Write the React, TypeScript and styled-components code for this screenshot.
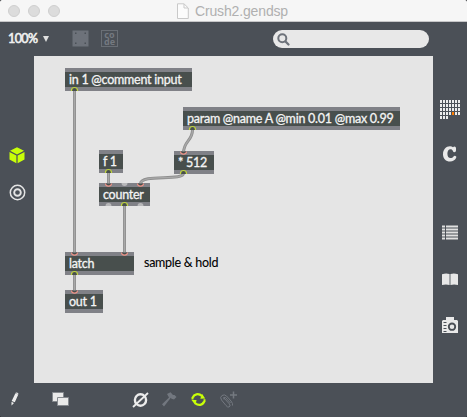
import React from "react";
import styled, { createGlobalStyle } from "styled-components";

const Global = createGlobalStyle`
  body { margin: 0; background: #000; overflow: hidden; }
  * { box-sizing: border-box; }
`;

const Window = styled.div`
  width: 467px;
  height: 417px;
  display: grid;
  grid-template-rows: 22px 34px 327px 34px;
  background: #4b5057;
  border-radius: 2px 2px 1px 1px;
  overflow: hidden;
  font-family: Lato, sans-serif;
`;

const TitleBar = styled.header`
  display: grid;
  grid-template-columns: 176px 1fr;
  background: #f6f6f6;
  border-bottom: 1px solid #c6c6c8;
`;

const Lights = styled.div`
  display: flex;
  gap: 8px;
  padding: 5px 0 0 8px;
`;

const Light = styled.i`
  width: 12px;
  height: 12px;
  border-radius: 50%;
  background: #dcdcdc;
  border: 1px solid #cfcfcf;
`;

const Title = styled.div`
  display: flex;
  align-items: flex-start;
  gap: 5px;
  padding-top: 3px;
  font: 14px/17px "Liberation Sans", sans-serif;
  letter-spacing: -0.15px;
  color: #b0b0b0;
  white-space: nowrap;
`;

const Toolbar = styled.div`
  display: flex;
  align-items: flex-start;
  padding-left: 8px;
`;

const Zoom = styled.div`
  display: flex;
  align-items: center;
  gap: 6px;
  width: 64px;
  height: 34px;
  padding-bottom: 1px;
  color: #f0f0f0;
  font-size: 12.5px;
  font-weight: 400;
  letter-spacing: -0.6px;
  -webkit-text-stroke: 0.6px #f0f0f0;
`;

const ToolIcons = styled.div`
  display: flex;
  gap: 12px;
  padding-top: 8px;
  width: 201px;
`;

const Search = styled.div`
  display: flex;
  width: 156px;
  height: 18px;
  margin-top: 8px;
  padding: 3px 0 0 4px;
  border-radius: 9px;
  background: #e8e8e8;
`;

const Body = styled.main`
  display: grid;
  grid-template-columns: 34px 399px 34px;
`;

const Rail = styled.aside<{ $top: number }>`
  display: flex;
  flex-direction: column;
  align-items: center;
  padding-top: ${(p) => p.$top}px;
`;

const Slot = styled.span<{ $after?: number }>`
  display: flex;
  margin-bottom: ${(p) => p.$after ?? 0}px;
`;

const Canvas = styled.section`
  position: relative;
  background: #e5e5e5;
`;

const Overlay = styled.svg`
  position: absolute;
  left: 0;
  top: 0;
  pointer-events: none;
`;

const Node = styled.div<{ $x: number; $y: number; $w: number }>`
  position: absolute;
  left: ${(p) => p.$x}px;
  top: ${(p) => p.$y}px;
  width: ${(p) => p.$w}px;
  height: 23px;
  padding-left: 4px;
  border: solid #808187;
  border-width: 4px 0;
  background: #484f4d;
  color: #f4f4f4;
  font-size: 12.5px;
  line-height: 15px;
  letter-spacing: -0.25px;
  -webkit-text-stroke: 0.3px #f4f4f4;
  white-space: nowrap;
`;

const Comment = styled.div`
  position: absolute;
  left: 110px;
  top: 199px;
  font-size: 12.5px;
  line-height: 15px;
  letter-spacing: -0.27px;
  -webkit-text-stroke: 0.1px #000;
  color: #000;
  white-space: nowrap;
`;

const Footer = styled.footer`
  display: flex;
  align-items: flex-start;
  padding: 8px 0 0 10px;
`;

const Action = styled.span<{ $w: number }>`
  display: flex;
  width: ${(p) => p.$w}px;
`;

const nodes = [
  { text: "in 1 @comment input", x: 31, y: 12, w: 127 },
  { text: "param @name A @min 0.01 @max 0.99", x: 149, y: 51, w: 217 },
  { text: "f 1", x: 65, y: 94, w: 24 },
  { text: "* 512", x: 140, y: 95, w: 40 },
  { text: "counter", x: 65, y: 127, w: 51 },
  { text: "latch", x: 31, y: 196, w: 69 },
  { text: "out 1", x: 31, y: 234, w: 38 },
];

const cords = [
  "M40.5 34V197",
  "M158.5 74C158.5 85 149.5 85 149.5 97",
  "M149.5 117C149.5 126 106.5 117 106.5 128",
  "M74.5 116V128",
  "M90.5 149V197",
  "M40.5 218V235",
];
const inlets = [[149.5, 95.5], [74.5, 127.5], [106.5, 127.5], [40.5, 196.5], [90.5, 196.5], [40.5, 234.5]];
const outlets = [[40.5, 35], [158.5, 74], [149.5, 118], [74.5, 117], [90.5, 150], [40.5, 219]];

const Cords = () => (
  <Overlay width="399" height="327" fill="none">
    {cords.map((d) => (
      <g key={d}>
        <path d={d} stroke="#8f8f8f" strokeWidth="3" />
        <path d={d} stroke="#a8a8a8" strokeWidth="1.3" />
      </g>
    ))}
    {inlets.map(([x, y]) => (
      <path key={`${x}-${y}`} d={`M${x - 3} ${y}a3 2.6 0 0 0 6 0`} fill="#484f4d" stroke="#ef9387" strokeWidth="1.1" />
    ))}
    {outlets.map(([x, y]) => (
      <path key={`${x}-${y}`} d={`M${x - 3} ${y}v-.5a3 3 0 0 1 6 0v.5`} fill="#484f4d" stroke="#c0d53b" strokeWidth="1.2" />
    ))}
    <path d="M87.5 127a3 3 0 0 0 6 0ZM71.5 150a3 3 0 0 1 6 0ZM103.5 150a3 3 0 0 1 6 0Z" fill="#b8b8ba" />
  </Overlay>
);

const FileIcon = () => (
  <svg width="14" height="17" fill="#fcfcfc" stroke="#c9c9c9">
    <path d="M1.500 .8H8L12.300 5V15.500H1.500Z" />
    <path d="M8 1V5H12" fill="none" />
  </svg>
);

const FrameIcon = () => (
  <svg width="17" height="17">
    <path d="M.5.5h16v16H.5z" fill="#6d727a" />
    <path d="M3 2.500h1.500v1.500H3zM12.500 2.500h1.500v1.500h-1.500zM3 12.500h1.500v1.500H3zM12.500 12.500h1.500v1.500h-1.500z" fill="#4b5057" />
  </svg>
);

const CodeFrame = styled.div`
  width: 17px;
  height: 17px;
  border: 1px solid #6a6f76;
  color: #747980;
  font: 700 9px/7px "Noto Sans", sans-serif;
  text-align: center;
`;

const SearchIcon = () => (
  <svg width="14" height="14" fill="none" stroke="#6e737b">
    <circle cx="5.300" cy="5.300" r="4" strokeWidth="2" />
    <path d="M8.500 8.500l3 3" strokeWidth="2.300" strokeLinecap="round" />
  </svg>
);

const CubeIcon = () => (
  <svg width="16" height="17" fill="#c8ff08">
    <path d="M8 .3L15 3.800 8 7.400 1 3.800ZM.5 5L7.400 8.600V16.300L.5 12.500ZM15.500 5L8.600 8.600V16.300L15.500 12.500Z" />
  </svg>
);

const TargetIcon = () => (
  <svg width="17" height="17" fill="none" stroke="#e4e4e4">
    <circle cx="8.500" cy="8.500" r="7.200" strokeWidth="1.500" />
    <circle cx="8.500" cy="8.500" r="3.300" strokeWidth="1.900" />
  </svg>
);

const GridIcon = () => (
  <svg width="20" height="19">
    {Array.from({ length: 31 }, (_, i) => (
      <rect
        key={i}
        x={(i % 7) * 3}
        y={Math.floor(i / 7) * 4}
        width="2"
        height="3"
        fill={i === 25 ? "#ff7d00" : "#ececec"}
      />
    ))}
  </svg>
);

const CIcon = () => (
  <svg width="16" height="18" fill="#e9e9e9">
    <path d="M11 2.200Q11.600 1.600 12.500 1.600Q14 1.600 14 3.200V5.500Q14 7.200 12.400 7.200Q11.300 7.200 10.900 6C10.400 4.700 9.700 4.200 8.500 4.200C6.500 4.200 5.400 6 5.400 8.800C5.400 11.500 6.500 13.100 8.600 13.100C9.900 13.100 10.700 12.500 11.500 11.500Q12.400 10.500 13.500 11Q14.900 11.700 14.100 13C12.900 15.200 10.900 16.500 8.100 16.500C3.900 16.500 1 13.600 1 9.200C1 4.500 4 1.200 8 1.200C9.300 1.200 10.200 1.600 11 2.200Z" />
  </svg>
);

const ListIcon = () => (
  <svg width="16" height="16" fill="#e0e0e0">
    {[0, 3, 6, 9, 12].map((y) => (
      <path key={y} d={`M0 ${y + 0.5}h3v2H0zM4 ${y + 0.5}h12v2H4z`} />
    ))}
  </svg>
);

const BookIcon = () => (
  <svg width="16" height="13">
    <path d="M0 1.200Q4 0 7.500 1V12Q4 11.200 0 12ZM8.500 1Q12 0 16 1.200V12Q12 11.200 8.500 12Z" fill="#e8e8e8" />
    <path d="M8 1V12" stroke="#aeb1b4" />
  </svg>
);

const CameraIcon = () => (
  <svg width="16" height="17">
    <path d="M4 0H12V3H15L16 4V16H0V4L1 3H4Z" fill="#e9e9e9" />
    <circle cx="10" cy="9.700" r="3.200" fill="none" stroke="#4b5057" strokeWidth="1.900" />
    <path d="M1.500 5.500h3M1.500 8.500h3M1.500 11.500h3M1.500 14.500h3" stroke="#4b5057" />
  </svg>
);

const PencilIcon = () => (
  <svg width="10" height="17" fill="#ececec">
    <path d="M5.300 2.500L8.300 3.600 4.800 11.200 1.700 10ZM5.700 1.800Q7 1 8.500 2.800L8.300 3.200 5.500 2.200ZM1.500 10.800L4 12 1.500 14.500Z" />
  </svg>
);

const WindowsIcon = () => (
  <svg width="18" height="17" stroke="#85898e" fill="#e9e9e9">
    <path d="M.5 1.500h11v9H.5z" />
    <path d="M5.500 6.500h11v8h-11z" />
  </svg>
);

const NullIcon = () => (
  <svg width="18" height="18" fill="none" stroke="#ececec">
    <ellipse cx="8.500" cy="9" rx="5.600" ry="5.700" strokeWidth="2.400" />
    <path d="M1 16L16 2" strokeWidth="1.800" />
  </svg>
);

const HammerIcon = () => (
  <svg width="17" height="17" fill="#72777f">
    <path d="M6 3L9.500 1.300 12 4 13.500 4 15.500 6 13 8.600 10.500 7.800 9.800 6.800 3 15.500 1 13.300 8 6.500Z" />
  </svg>
);

const RefreshIcon = () => (
  <svg width="17" height="17" fill="none" stroke="#c8ff08">
    <path d="M2.800 6.500C4 3.300 8.300 1.700 12 5M14.200 10.500C12.500 14.400 8.500 15 5 12" strokeWidth="2.300" />
    <path d="M12 2.800L15.200 7.500 10.300 7.700ZM5.300 14L1.500 9 6.600 9Z" fill="#c8ff08" stroke="none" />
    <path d="M2.500 8.500V6M14.500 8.300V11" strokeWidth="2" />
  </svg>
);

const ClipIcon = () => (
  <svg width="18" height="18" fill="none" stroke="#747980">
    <path d="M3.500 6.500L9.500 13Q11 15.500 9 16Q7.500 16.500 6 14.500L1.500 9Q-.5 6.300 2 4.500Q4.500 3 6.500 5L11 10Q13 12.500 12.500 14.500M4 8.500Q3 6 5.500 6.500L10.500 12" />
    <path d="M13.500.5v7M10 4h7" strokeWidth="1.500" />
  </svg>
);

export default function App() {
  return (
    <>
      <Global />
      <Window>
        <TitleBar>
          <Lights><Light /><Light /><Light /></Lights>
          <Title><FileIcon />Crush2.gendsp</Title>
        </TitleBar>
        <Toolbar>
          <Zoom>
            100%
            <svg width="6" height="6"><path d="M0 0h6L3 6Z" fill="#e0e0e0" /></svg>
          </Zoom>
          <ToolIcons><FrameIcon /><CodeFrame>co<br />de</CodeFrame></ToolIcons>
          <Search><SearchIcon /></Search>
        </Toolbar>
        <Body>
          <Rail $top={91}>
            <Slot $after={20}><CubeIcon /></Slot>
            <Slot><TargetIcon /></Slot>
          </Rail>
          <Canvas>
            {nodes.map((n) => (
              <Node key={n.text} $x={n.x} $y={n.y} $w={n.w}>{n.text}</Node>
            ))}
            <Comment>sample &amp; hold</Comment>
            <Cords />
          </Canvas>
          <Rail $top={44}>
            <Slot $after={26}><GridIcon /></Slot>
            <Slot $after={62}><CIcon /></Slot>
            <Slot $after={32}><ListIcon /></Slot>
            <Slot $after={31}><BookIcon /></Slot>
            <Slot><CameraIcon /></Slot>
          </Rail>
        </Body>
        <Footer>
          <Action $w={42}><PencilIcon /></Action>
          <Action $w={80}><WindowsIcon /></Action>
          <Action $w={29}><NullIcon /></Action>
          <Action $w={29}><HammerIcon /></Action>
          <Action $w={30}><RefreshIcon /></Action>
          <Action $w={18}><ClipIcon /></Action>
        </Footer>
      </Window>
    </>
  );
}
